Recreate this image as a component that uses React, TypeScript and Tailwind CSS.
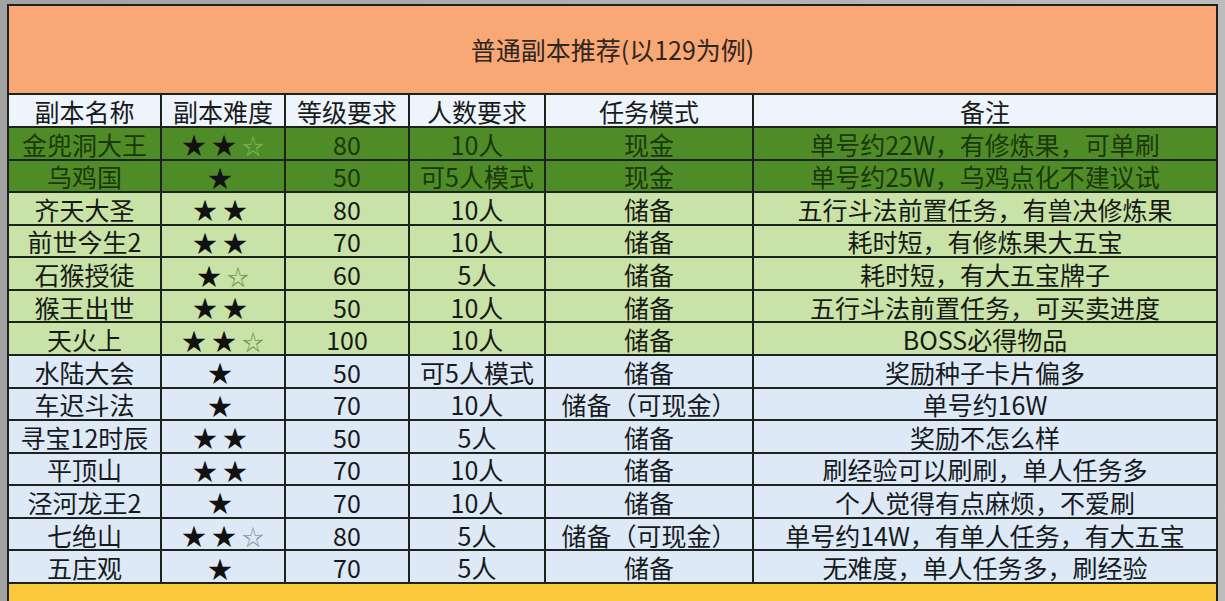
import React from 'react';

type Tone = 'dark' | 'light' | 'blue';

const rows: { name: string; full: number; empty: number; level: string; people: string; mode: string; note: string; tone: Tone }[] = [
  { name: '金兜洞大王', full: 2, empty: 1, level: '80', people: '10人', mode: '现金', note: '单号约22W，有修炼果，可单刷', tone: 'dark' },
  { name: '乌鸡国', full: 1, empty: 0, level: '50', people: '可5人模式', mode: '现金', note: '单号约25W，乌鸡点化不建议试', tone: 'dark' },
  { name: '齐天大圣', full: 2, empty: 0, level: '80', people: '10人', mode: '储备', note: '五行斗法前置任务，有兽决修炼果', tone: 'light' },
  { name: '前世今生2', full: 2, empty: 0, level: '70', people: '10人', mode: '储备', note: '耗时短，有修炼果大五宝', tone: 'light' },
  { name: '石猴授徒', full: 1, empty: 1, level: '60', people: '5人', mode: '储备', note: '耗时短，有大五宝牌子', tone: 'light' },
  { name: '猴王出世', full: 2, empty: 0, level: '50', people: '10人', mode: '储备', note: '五行斗法前置任务，可买卖进度', tone: 'light' },
  { name: '天火上', full: 2, empty: 1, level: '100', people: '10人', mode: '储备', note: 'BOSS必得物品', tone: 'light' },
  { name: '水陆大会', full: 1, empty: 0, level: '50', people: '可5人模式', mode: '储备', note: '奖励种子卡片偏多', tone: 'blue' },
  { name: '车迟斗法', full: 1, empty: 0, level: '70', people: '10人', mode: '储备（可现金）', note: '单号约16W', tone: 'blue' },
  { name: '寻宝12时辰', full: 2, empty: 0, level: '50', people: '5人', mode: '储备', note: '奖励不怎么样', tone: 'blue' },
  { name: '平顶山', full: 2, empty: 0, level: '70', people: '10人', mode: '储备', note: '刷经验可以刷刷，单人任务多', tone: 'blue' },
  { name: '泾河龙王2', full: 1, empty: 0, level: '70', people: '10人', mode: '储备', note: '个人觉得有点麻烦，不爱刷', tone: 'blue' },
  { name: '七绝山', full: 2, empty: 1, level: '80', people: '5人', mode: '储备（可现金）', note: '单号约14W，有单人任务，有大五宝', tone: 'blue' },
  { name: '五庄观', full: 1, empty: 0, level: '70', people: '5人', mode: '储备', note: '无难度，单人任务多，刷经验', tone: 'blue' },
];

const toneBg: Record<Tone, string> = {
  dark: 'bg-[#4f8c27] text-[#1b380b]',
  light: 'bg-[#c9e2a7] text-[#171a15]',
  blue: 'bg-[#dde9f6] text-[#171a1d]',
};

const hollow: Record<Tone, string> = {
  dark: 'text-[#7fb554]',
  light: 'text-[#6e9a48]',
  blue: 'text-[#8d9aa6]',
};

const cols = 'grid grid-cols-[153px_124px_124px_136px_208px_1fr]';
const cell = 'flex items-center justify-center border-r-2 border-[#1c221c] pt-[2px] whitespace-nowrap';
const last = 'flex items-center justify-center pt-[2px] whitespace-nowrap';

function Stars({ full, empty, tone }: { full: number; empty: number; tone: Tone }) {
  return (
    <div className="flex items-center text-[24px] leading-none text-[#111]">
      <span className="tracking-[6px]">{'★'.repeat(full)}</span>
      {empty > 0 && <span className={`${hollow[tone]} text-[22px]`}>☆</span>}
    </div>
  );
}

export default function App() {
  return (
    <div
      className="w-[1225px] h-[601px] overflow-hidden bg-[linear-gradient(to_right,#a2a2a2,#bdbdbd)] pl-[7px] pt-[4px]"
      style={{ fontFamily: '"Noto Sans CJK SC", "Noto Sans", sans-serif' }}
    >
      <div className="w-[1211px] border-2 border-[#1c221c] text-[25px] leading-none">
        <div className="h-[89px] bg-[#f8a874] border-b-2 border-[#1c221c] flex items-center justify-center text-[#2e2620]">
          普通副本推荐(以129为例)
        </div>
        <div className={`${cols} h-[33px] bg-[#eef4fb] border-b-2 border-[#1c221c] text-[#1a1a1a]`}>
          <div className={cell}>副本名称</div>
          <div className={cell}>副本难度</div>
          <div className={cell}>等级要求</div>
          <div className={cell}>人数要求</div>
          <div className={cell}>任务模式</div>
          <div className={last}>备注</div>
        </div>
        {rows.map((r) => (
          <div key={r.name} className={`${cols} h-[32.57px] border-b-2 border-[#1c221c] ${toneBg[r.tone]}`}>
            <div className={cell}>{r.name}</div>
            <div className={cell}>
              <Stars full={r.full} empty={r.empty} tone={r.tone} />
            </div>
            <div className={cell}>{r.level}</div>
            <div className={cell}>{r.people}</div>
            <div className={cell}>{r.mode}</div>
            <div className={last}>{r.note}</div>
          </div>
        ))}
        <div className="h-[40px] bg-[#f9c83c]" />
      </div>
    </div>
  );
}
